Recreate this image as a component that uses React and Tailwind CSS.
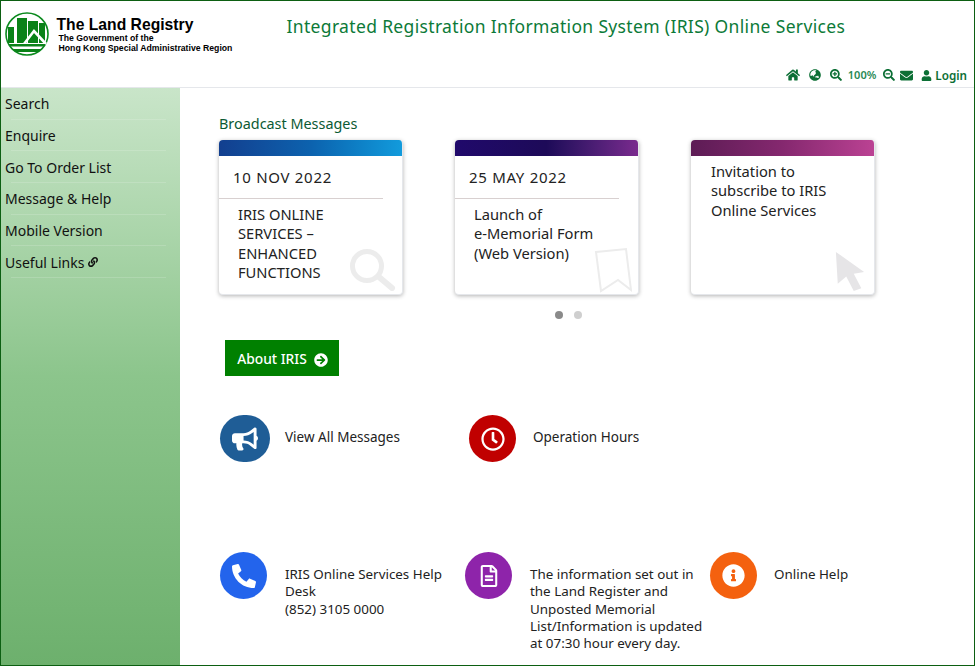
import React from 'react';
import {
  FaHome, FaGlobeAsia, FaSearchPlus, FaSearchMinus, FaEnvelope, FaUser, FaLink,
  FaArrowCircleRight, FaBullhorn, FaRegClock, FaPhone, FaRegFileAlt, FaInfoCircle,
} from 'react-icons/fa';

const sideLinks = ['Search', 'Enquire', 'Go To Order List', 'Message & Help', 'Mobile Version', 'Useful Links'];

function Logo() {
  return (
    <svg width="44" height="44" viewBox="0 0 44 44" className="shrink-0 mt-[1px]">
      <defs>
        <clipPath id="logoClip"><circle cx="22" cy="22" r="21" /></clipPath>
      </defs>
      <circle cx="22" cy="22" r="21" fill="none" stroke="#0b8a1e" strokeWidth="1.6" />
      <g clipPath="url(#logoClip)" fill="#0a8218">
        <rect x="3" y="15" width="6" height="16" />
        <rect x="12" y="6" width="10" height="25" />
        <rect x="23" y="9" width="10" height="22" />
        <rect x="34" y="11" width="6" height="20" />
      </g>
      <path d="M19 32l10-13 12 13" fill="none" stroke="#fff" strokeWidth="2.6" />
      <g clipPath="url(#logoClip)" fill="#0a8218">
        <rect x="0" y="32" width="44" height="2.5" />
        <rect x="0" y="37" width="44" height="3" />
      </g>
    </svg>
  );
}

function Card({ stripe, date, lines, children }) {
  return (
    <div className="relative w-[184px] h-[155px] bg-white rounded-[4px] border-b border-r border-gray-200 shadow-[0_1px_4px_rgba(0,0,0,0.3)] overflow-hidden">
      <div className={`h-[16px] ${stripe}`} />
      {date && (
        <div className="h-[43px] flex items-center pl-[14px] border-b border-[#d8d0d0] mr-[19px] text-[15px] tracking-[0.7px] text-[#222]">
          {date}
        </div>
      )}
      <div className={`text-[14.7px] leading-[19.4px] text-[#222] pt-[6px] ${date ? 'pl-[19px]' : 'pl-[20px]'}`}>
        {lines.map(line => <div key={line}>{line}</div>)}
      </div>
      {children}
    </div>
  );
}

function RoundLink({ color, icon, className, circle = 'w-[47px] mr-0', children }) {
  return (
    <div className={`flex items-start ${className}`}>
      <div className={`h-[47px] rounded-full shrink-0 flex items-center justify-center text-white ${circle} ${color}`}>
        {icon}
      </div>
      <div className="ml-[18px] text-[13.5px] leading-[17.3px] text-[#222]">{children}</div>
    </div>
  );
}

export default function App() {
  return (
    <div className="w-[976px] h-[667px] bg-white overflow-hidden font-['Noto_Sans','Open_Sans',sans-serif]">
      <div className="w-[975px] h-[666px] border-[1.5px] border-[#0c5f12] flex flex-col">
        {/* header */}
        <header className="h-[87px] shrink-0 border-b border-gray-200 flex flex-col">
          <div className="flex items-start pl-[4px] pt-[10px]">
            <Logo />
            <div className="ml-[7.5px] w-[230px] font-['Liberation_Sans',Arial,sans-serif] font-bold text-black">
              <div className="text-[15.7px] leading-[18px] pt-[5px]">The Land Registry</div>
              <div className="text-[8.7px] leading-[9.5px] ml-[2px]">The Government of the</div>
              <div className="text-[8.7px] leading-[9.5px] ml-[2px]">Hong Kong Special Administrative Region</div>
            </div>
            <div className="pt-[3px] text-[17.5px] leading-[24px] tracking-[0.34px] text-[#0c7a38] whitespace-nowrap">
              Integrated Registration Information System (IRIS) Online Services
            </div>
          </div>
          <div className="mt-auto pb-[5px] pr-[7px] flex items-center justify-end text-[#0c6f35] font-semibold text-[11.7px] leading-[14px]">
            <FaHome size={14} className="mr-[9px]" />
            <FaGlobeAsia size={12} className="mr-[9px]" />
            <FaSearchPlus size={12} className="mr-[6px]" />
            <span className="mr-[7px] text-[11px] text-[#2a8a55]">100%</span>
            <FaSearchMinus size={12} className="mr-[5px]" />
            <FaEnvelope size={13} className="mr-[8px]" />
            <FaUser size={11} className="mr-[3px]" />
            <span>Login</span>
          </div>
        </header>

        <div className="flex-1 flex min-h-0">
          {/* side menu */}
          <nav className="w-[179px] shrink-0 bg-gradient-to-b from-[#c9e5c9] via-[#8cc58c] to-[#6db06d]">
            {sideLinks.map((link, i) => (
              <div key={link} className="h-[31.7px] pl-[4px] flex items-center relative text-[14px] text-[#111]">
                <span>{link}</span>
                {i === 5 && <FaLink size={10} className="ml-[4px]" />}
                <div className="absolute left-[10px] right-[14px] bottom-0 h-px bg-white/15" />
              </div>
            ))}
          </nav>

          {/* main */}
          <main className="flex-1 min-w-0 pl-[39px]">
            <h2 className="pt-[27px] text-[14.4px] leading-[18px] font-normal text-[#0b5a34]">Broadcast Messages</h2>
            <div className="mt-[7px] flex gap-[52px]">
              <Card
                stripe="bg-gradient-to-r from-[#123f8f] via-[#0c62ae] to-[#129bdc]"
                date="10 NOV 2022"
                lines={['IRIS ONLINE', 'SERVICES –', 'ENHANCED', 'FUNCTIONS']}
              >
                <svg width="50" height="44" viewBox="0 0 50 44" className="absolute right-[4px] bottom-[3px]" fill="none" stroke="#ececec">
                  <circle cx="19" cy="19" r="14.5" strokeWidth="5" />
                  <path d="M31 30l13 11" strokeWidth="6" strokeLinecap="round" />
                </svg>
              </Card>
              <Card
                stripe="bg-gradient-to-r from-[#20096b] via-[#1d0a58] to-[#7a2a8e]"
                date="25 MAY 2022"
                lines={['Launch of', 'e-Memorial Form', '(Web Version)']}
              >
                <svg width="38" height="46" viewBox="0 0 38 46" className="absolute right-[6px] bottom-[1px]" fill="none" stroke="#ececec" strokeWidth="2">
                  <path d="M2 5l30-3 5 41-13-10-17 11z" />
                </svg>
              </Card>
              <Card
                stripe="bg-gradient-to-r from-[#5d1c55] via-[#85286f] to-[#bb4293]"
                lines={['Invitation to', 'subscribe to IRIS', 'Online Services']}
              >
                <svg width="32" height="40" viewBox="0 0 34 44" preserveAspectRatio="none" className="absolute right-[8px] bottom-[3px]" fill="#e6e5e7">
                  <path d="M2 1l30 22-11 2 8 16-8 3-8-16-9 8z" />
                </svg>
              </Card>
            </div>

            <div className="mt-[16px] flex justify-center gap-[11px] w-[698px]">
              <span className="w-[8px] h-[8px] rounded-full bg-[#8a8a8a]" />
              <span className="w-[8px] h-[8px] rounded-full bg-[#cfcfcf]" />
            </div>

            <button className="mt-[21px] ml-[6px] w-[114px] h-[36px] pt-[3px] pl-[1px] bg-[#008000] flex items-center justify-center gap-[7px] text-white text-[13.8px] font-medium">
              About IRIS
              <FaArrowCircleRight size={14} />
            </button>

            <div className="mt-[39px] h-[137px] flex items-start">
              <RoundLink color="bg-[#1f5d96]" circle="w-[50px] mr-[-3px]" icon={<FaBullhorn size={26} />} className="w-[249px] ml-[1px]">
                <div className="pt-[14px]">View All Messages</div>
              </RoundLink>
              <RoundLink color="bg-[#c00000]" icon={<FaRegClock size={24} />} className="w-[240px]">
                <div className="pt-[14px] ml-[-1px]">Operation Hours</div>
              </RoundLink>
            </div>

            <div className="flex items-start">
              <RoundLink color="bg-[#2364ec]" icon={<FaPhone size={24} className="scale-x-[-1]" />} className="w-[245px] ml-[1px]">
                <div className="pt-[14px] w-[165px] text-[13.4px]">IRIS Online Services Help Desk<br />(852) 3105 0000</div>
              </RoundLink>
              <RoundLink color="bg-[#8e24aa]" icon={<FaRegFileAlt size={22} />} className="w-[245px]">
                <div className="pt-[14px] w-[175px] text-[13.4px]">The information set out in the Land Register and Unposted Memorial List/Information is updated at 07:30 hour every day.</div>
              </RoundLink>
              <RoundLink color="bg-[#f4610f]" icon={<FaInfoCircle size={23} />} className="w-[160px]">
                <div className="pt-[14px] ml-[-1px] text-[13.4px]">Online Help</div>
              </RoundLink>
            </div>
          </main>
        </div>
      </div>
    </div>
  );
}
